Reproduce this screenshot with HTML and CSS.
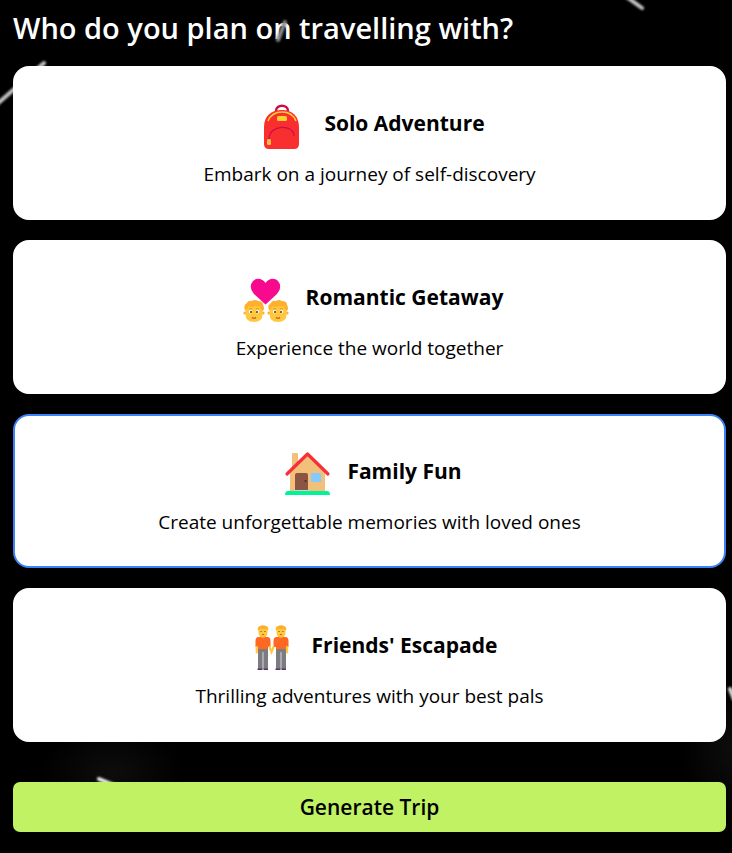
FILE: index.html
```html
<!DOCTYPE html>
<html lang="en">
<head>
<meta charset="utf-8">
<meta name="viewport" content="width=device-width, initial-scale=1">
<title>Plan your trip</title>
<link rel="stylesheet" href="styles.css">
</head>
<body>
<main class="planner">
  <h1 class="title" id="question">Who do you plan on travelling with?</h1>
  <svg class="meteors" viewBox="0 0 732 853" preserveAspectRatio="xMidYMin slice" aria-hidden="true">
    <defs>
      <filter id="soft" x="-50%" y="-50%" width="200%" height="200%"><feGaussianBlur stdDeviation="1"/></filter>
      <radialGradient id="glow"><stop offset="0" stop-color="#0d0d0d"/><stop offset="1" stop-color="#0d0d0d" stop-opacity="0"/></radialGradient>
    </defs>
    <ellipse cx="112" cy="772" rx="72" ry="44" fill="url(#glow)"/>
    <ellipse cx="732" cy="750" rx="52" ry="70" fill="url(#glow)"/>
    <g filter="url(#soft)" stroke-linecap="round" fill="none">
      <path d="M-4 105 44 63" stroke="#c4c4c4" stroke-width="4"/>
      <path d="M624-5 642 8" stroke="#c4c4c4" stroke-width="4"/>
      <path d="M285 22 278 40" stroke="#8c8c8c" stroke-width="4"/>
      <path d="M99 779 116 786" stroke="#eee" stroke-width="4"/>
      <path d="M730 689 734 699" stroke="#ddd" stroke-width="4"/>
    </g>
  </svg>
  <div class="options" role="group" aria-labelledby="question">
    <button class="card" type="button" aria-pressed="false">
      <span class="card-head">
        <svg class="icon" viewBox="0 0 60 60" aria-hidden="true">
          <path d="M22 15C22 8 34 8 34 15" fill="none" stroke="#ca0b4a" stroke-width="2.4"/>
          <path d="M10 31C10 20 17 14 28 14s17 7 17 17v17q0 5-5 5H15q-5 0-5-5z" fill="#f92f2f"/>
          <path d="M14 25C19 13 37 13 42 25" fill="none" stroke="#ffce31" stroke-width="1.6"/>
          <rect x="23" y="20" width="10" height="5" rx="1.5" fill="#ffce31"/>
          <path d="M15 43C15 28 40 28 40 40" fill="none" stroke="#ca0b4a" stroke-width="1.1"/>
          <path d="M15 42v3" stroke="#ca0b4a"/>
          <rect x="13" y="43" width="4" height="6" rx="1.5" fill="#f9c23c"/>
          <rect x="14" y="45" width="2" height="2" fill="#f3ad61"/>
        </svg>
        <span class="card-title">Solo Adventure</span>
      </span>
      <span class="card-text">Embark on a journey of self-discovery</span>
    </button>
    <button class="card" type="button" aria-pressed="false">
      <span class="card-head">
        <svg class="icon" viewBox="0 0 60 60" aria-hidden="true">
          <defs>
            <g id="face">
              <path d="M9 40q-2-5 2-7 1-3 5-2 3-2 6 0 5 0 5 4 2 3 0 6z" fill="#ffb02e"/>
              <circle cx="9" cy="43" r="1.600" fill="#ffb02e"/><circle cx="27" cy="43" r="1.600" fill="#ffb02e"/>
              <path d="M9.500 40q2-.5 3-4 3 2 7 0 3 1 4 0 .5 3 3 4v4q0 8-8.500 8t-8.500-8z" fill="#ffc83d"/>
              <circle cx="14.500" cy="41.800" r="1.700" fill="#fff"/><circle cx="21.500" cy="41.800" r="1.700" fill="#fff"/>
              <circle cx="15" cy="42" r="1.100" fill="#5c4220"/><circle cx="21" cy="42" r="1.100" fill="#5c4220"/>
              <path d="M13 38.800h3m4 0h3" stroke="#d98a2b" stroke-width=".8"/>
              <path d="M16 47.500q2 1.500 4 0" stroke="#d5462c" stroke-width="1.200" fill="none"/>
            </g>
          </defs>
          <path d="M29.500 34.500 18 24Q12 17 17 11c4-4 10-2 12.500 2C32 9 38 7 42 11q5 6-1 13z" fill="#f70a8d"/>
          <use href="#face"/><use href="#face" x="24"/>
        </svg>
        <span class="card-title">Romantic Getaway</span>
      </span>
      <span class="card-text">Experience the world together</span>
    </button>
    <button class="card card-selected" type="button" aria-pressed="true">
      <span class="card-head">
        <svg class="icon" viewBox="0 0 60 60" aria-hidden="true">
          <rect x="15" y="9" width="6" height="18" rx="1" fill="#f3c07b"/>
          <path d="M13 28 30.500 11 48 28v20H13z" fill="#f3c07b"/>
          <path d="M10 30 30.500 10 51 30" fill="none" stroke="#f92f37" stroke-width="3.200" stroke-linecap="round" stroke-linejoin="round"/>
          <path d="M18 46V31q0-2 2-2h9q2 0 2 2v15z" fill="#8c5543"/>
          <circle cx="28.500" cy="37" r="1" fill="#402a32"/>
          <rect x="34" y="29" width="10" height="9" rx="1" fill="#83cbff"/>
          <path d="M17 46h15v2H17z" fill="#d3d3d3"/>
          <path d="M8 51q0-4 3-4h39q3 0 3 4z" fill="#00f397"/>
        </svg>
        <span class="card-title">Family Fun</span>
      </span>
      <span class="card-text">Create unforgettable memories with loved ones</span>
    </button>
    <button class="card" type="button" aria-pressed="false">
      <span class="card-head">
        <svg class="icon" viewBox="0 0 60 60" aria-hidden="true">
          <defs>
            <g id="person">
              <path d="M18 17h6v5h-6z" fill="#ffb02e"/>
              <path d="M16.500 11q0-3 4.500-3t4.500 3v3.500q0 4.500-4.500 4.500t-4.500-4.500z" fill="#ffc83d"/>
              <path d="M16 13q-1-4 2-5 3-1.500 6 0 3 1 2 5-1-2-2-2.500-3 1.500-6 0-1 1-2 2.500z" fill="#ffad28"/>
              <path d="M18.500 13.500h1.200m2.600 0h1.200" stroke="#8a5a30"/>
              <path d="M20 16.500h2" stroke="#e0512f"/>
              <path d="M16 29h10v22H16z" fill="#7c7c80"/>
              <path d="M21 34v17" stroke="#d8d8da"/>
              <path d="M13.500 23q0-4 3-4h2q2.500 2 5 0h2q3 0 3 4v6h-3v2H16v-2h-2.500z" fill="#ff6723"/>
              <path d="M15.500 50.500h5V52h-5zm6 0H26V52h-4.500z" fill="#533566"/>
            </g>
          </defs>
          <use href="#person"/><use href="#person" x="18"/>
          <path d="M14.800 29v5.500M27.500 29l2 5 2-5m13.500 0v5.500" stroke="#ffc83d" stroke-width="2.200" stroke-linecap="round" fill="none"/>
        </svg>
        <span class="card-title">Friends' Escapade</span>
      </span>
      <span class="card-text">Thrilling adventures with your best pals</span>
    </button>
  </div>
  <button class="generate" type="button">Generate Trip</button>
</main>
</body>
</html>
```
FILE: styles.css
```css
* {
  box-sizing: border-box;
}

body {
  margin: 0;
  background: #000;
  color: #000;
  font-family: "Segoe UI", "Open Sans", sans-serif;
}

button {
  font: inherit;
  color: inherit;
  cursor: pointer;
}

.planner {
  position: relative;
  min-height: 100vh;
  padding: 8px 6px 21px 13px;
  overflow: hidden;
}

.title {
  margin: 0 0 18px;
  color: #fff;
  font-size: 29px;
  font-weight: 600;
  line-height: 40px;
}

.meteors {
  position: absolute;
  top: 0;
  left: 0;
  width: 100%;
  pointer-events: none;
}

.options {
  position: relative;
  display: flex;
  flex-direction: column;
  gap: 20px;
}

.card {
  display: flex;
  flex-direction: column;
  align-items: center;
  width: 100%;
  padding: 28px 18px 29px;
  border: 2px solid #fff;
  border-radius: 16px;
  background: #fff;
}

.card-selected {
  border-color: #3b82f6;
}

.card-head {
  display: flex;
  align-items: center;
  gap: 10px;
}

.icon {
  width: 60px;
  height: 60px;
}

.card-title {
  padding-bottom: 6px;
  font-size: 21px;
  font-weight: 700;
  line-height: 32px;
}

.card-text {
  margin-top: 3px;
  font-size: 19px;
  line-height: 30px;
}

.generate {
  position: relative;
  width: 100%;
  margin-top: 40px;
  padding: 9px 16px;
  border: 0;
  border-radius: 7px;
  background: #c1f264;
  font-size: 21px;
  font-weight: 600;
  line-height: 32px;
}
```
